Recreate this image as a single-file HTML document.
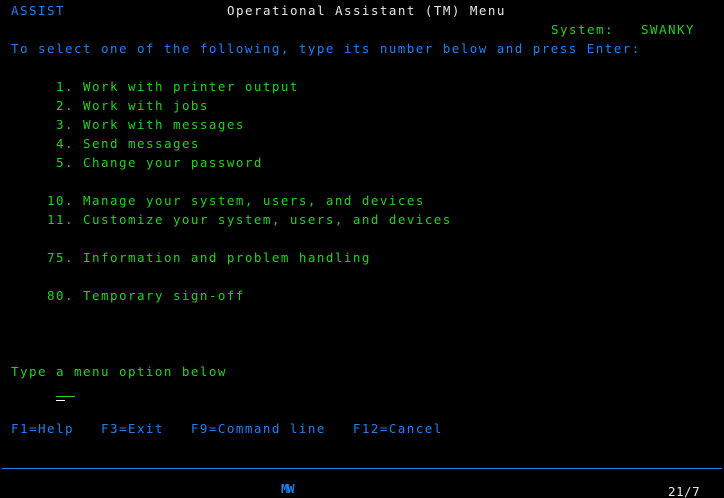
<!DOCTYPE html>
<html><head><meta charset="utf-8"><style>
html,body{margin:0;padding:0;background:#000;width:724px;height:498px;overflow:hidden;position:relative}
.t{position:absolute;font-family:"DejaVu Sans Mono","Liberation Mono",monospace;font-size:12.5px;letter-spacing:1.47px;white-space:pre;line-height:14px}
.b{color:#1f80f0}.g{color:#24d024}.w{color:#e6e6e6}
</style></head><body>
<div class="t b" style="left:11px;top:4px">ASSIST</div>
<div class="t w" style="left:227px;top:4px">Operational Assistant (TM) Menu</div>
<div class="t g" style="left:551px;top:23px">System:   SWANKY</div>
<div class="t b" style="left:11px;top:42px">To select one of the following, type its number below and press Enter:</div>
<div class="t g" style="left:56px;top:80px">1. Work with printer output</div>
<div class="t g" style="left:56px;top:99px">2. Work with jobs</div>
<div class="t g" style="left:56px;top:118px">3. Work with messages</div>
<div class="t g" style="left:56px;top:137px">4. Send messages</div>
<div class="t g" style="left:56px;top:156px">5. Change your password</div>
<div class="t g" style="left:47px;top:194px">10. Manage your system, users, and devices</div>
<div class="t g" style="left:47px;top:213px">11. Customize your system, users, and devices</div>
<div class="t g" style="left:47px;top:251px">75. Information and problem handling</div>
<div class="t g" style="left:47px;top:289px">80. Temporary sign-off</div>
<div class="t g" style="left:11px;top:365px">Type a menu option below</div>
<div style="position:absolute;left:56px;top:396px;width:19px;height:1px;background:#24d024"></div>
<div style="position:absolute;left:56px;top:400px;width:9px;height:1px;background:#fff"></div>
<div class="t b" style="left:11px;top:422px">F1=Help   F3=Exit   F9=Command line   F12=Cancel</div>
<div style="position:absolute;left:2px;top:468px;width:720px;height:1px;background:#1f80f0"></div>
<div class="t b" style="left:281px;top:482px;font-weight:bold;letter-spacing:-1px;font-size:12px">MW</div>
<div class="t w" style="left:668px;top:485px;letter-spacing:0.5px">21/7</div>
</body></html>
